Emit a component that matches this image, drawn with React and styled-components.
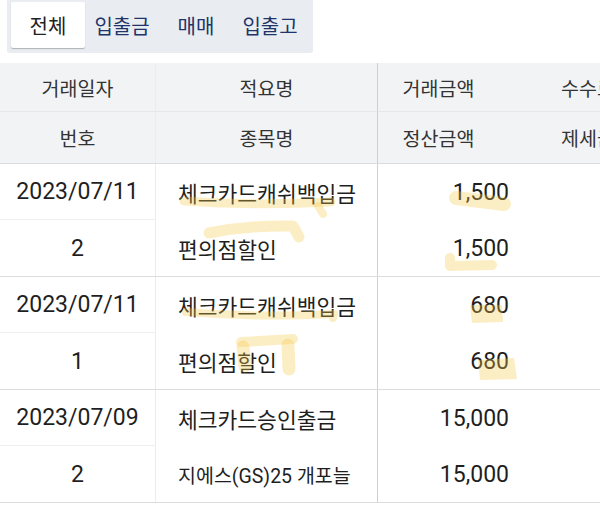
import styled, { createGlobalStyle } from 'styled-components';

const GlobalStyle = createGlobalStyle`
  html, body {
    margin: 0;
    padding: 0;
    background: #ffffff;
  }
  body {
    font-family: "Roboto", "Noto Sans CJK KR", sans-serif;
    color: #222222;
  }
`;

const Page = styled.div`
  position: relative;
  width: 600px;
  height: 514px;
  overflow: hidden;
  background: #ffffff;
`;

const TabBar = styled.div`
  display: inline-flex;
  margin-left: 7px;
  padding: 2px 6px 5px 4px;
  background: #e9edf1;
  border-radius: 0 0 3px 3px;
`;

const Tab = styled.button`
  width: 74px;
  height: 46px;
  border: none;
  border-radius: 2px;
  padding: 0;
  font-family: "Noto Sans CJK KR", sans-serif;
  font-size: 20px;
  cursor: pointer;
  background: ${(p) => (p.$active ? '#ffffff' : 'transparent')};
  color: ${(p) => (p.$active ? '#222222' : '#22336a')};
  box-shadow: ${(p) => (p.$active ? '0 1px 1px rgba(0, 0, 0, 0.25)' : 'none')};
`;

const Table = styled.div`
  margin-top: 10px;
  width: 760px;
`;

const Group = styled.div`
  display: grid;
  grid-template-columns: 156px 222px 143px 134px 105px;
  grid-template-rows: ${(p) => (p.$head ? '49px 51px' : '56px 56px')};
  background: ${(p) => (p.$head ? '#f2f3f5' : '#ffffff')};
  border-bottom: 1px solid #dcdcdc;
`;

const Cell = styled.div`
  box-sizing: border-box;
  display: flex;
  align-items: center;
  justify-content: ${(p) =>
    p.$align === 'right' ? 'flex-end' : p.$align === 'left' ? 'flex-start' : 'center'};
  padding: ${(p) => p.$pad || '0'};
  border-right: ${(p) =>
    p.$line === 'dark' ? '1px solid #cfcfcf' : p.$line === 'light' ? '1px solid #ececec' : 'none'};
  border-bottom: ${(p) => (p.$under ? `1px solid ${p.$under}` : 'none')};
  font-size: ${(p) => p.$size || '23px'};
  color: #1f1f1f;
  white-space: nowrap;
`;

const HeadText = styled.span`
  font-family: "Noto Sans CJK KR", sans-serif;
  font-size: 19.5px;
  color: #333333;
`;

const Highlights = styled.svg`
  position: absolute;
  top: 0;
  left: 0;
  pointer-events: none;
`;

const tabs = ['전체', '입출금', '매매', '입출고'];

const rows = [
  { date: '2023/07/11', no: '2', memo: '체크카드캐쉬백입금', item: '편의점할인', amount: '1,500', settle: '1,500' },
  { date: '2023/07/11', no: '1', memo: '체크카드캐쉬백입금', item: '편의점할인', amount: '680', settle: '680' },
  { date: '2023/07/09', no: '2', memo: '체크카드승인출금', item: '지에스(GS)25 개포늘', amount: '15,000', settle: '15,000', small: true },
];

function HeaderGroup() {
  const under = '#e6e7ea';
  return (
    <Group $head>
      <Cell $line="light" $under={under}><HeadText>거래일자</HeadText></Cell>
      <Cell $line="dark" $under={under}><HeadText>적요명</HeadText></Cell>
      <Cell $under={under} $pad="0 22px 0 0"><HeadText>거래금액</HeadText></Cell>
      <Cell $under={under}><HeadText>수수료</HeadText></Cell>
      <Cell $under={under} />
      <Cell $line="light"><HeadText>번호</HeadText></Cell>
      <Cell $line="dark"><HeadText>종목명</HeadText></Cell>
      <Cell $pad="0 22px 0 0"><HeadText>정산금액</HeadText></Cell>
      <Cell><HeadText>제세금</HeadText></Cell>
      <Cell />
    </Group>
  );
}

function RowGroup({ row }) {
  return (
    <Group>
      <Cell $line="light" $under="#efefef">{row.date}</Cell>
      <Cell $line="dark" $align="left" $pad="0 0 0 22px" $size="21.5px">{row.memo}</Cell>
      <Cell $align="right" $pad="0 12px 0 0">{row.amount}</Cell>
      <Cell />
      <Cell />
      <Cell $line="light">{row.no}</Cell>
      <Cell $line="dark" $align="left" $pad="0 0 0 22px" $size={row.small ? '19.5px' : '21.5px'}>
        {row.item}
      </Cell>
      <Cell $align="right" $pad="0 12px 0 0">{row.settle}</Cell>
      <Cell />
      <Cell />
    </Group>
  );
}

function Marker() {
  const ink = { stroke: '#f7c948', strokeOpacity: 0.32, fill: 'none', strokeLinecap: 'round', strokeLinejoin: 'round' };
  const blob = { fill: '#f7c948', fillOpacity: 0.32 };
  return (
    <Highlights width="600" height="514" viewBox="0 0 600 514">
      <path d="M184 201 Q 255 206 331 202" strokeWidth="9" {...ink} />
      <path d="M318 206 L 323 214" strokeWidth="8" {...ink} />
      <path d="M209 233 Q 250 225 293 226 L 299 237" strokeWidth="11" {...ink} />
      <path d="M456 198 L 504 204" strokeWidth="14" {...ink} />
      <path d="M450 258 L 450 266 L 492 265" strokeWidth="10" {...ink} />
      <path d="M186 312 Q 260 318 334 314 L 333 318" strokeWidth="8" {...ink} />
      <path d="M241 342 L 293 339" strokeWidth="10" {...ink} />
      <path d="M243 347 L 245 366 M 288 345 L 289 369" strokeWidth="13" {...ink} />
      <polygon points="470,305 502,305 503,322 472,323" {...blob} />
      <polygon points="478,360 514,358 517,379 480,380" {...blob} />
    </Highlights>
  );
}

export default function App() {
  return (
    <Page>
      <GlobalStyle />
      <TabBar>
        {tabs.map((t, i) => (
          <Tab key={t} $active={i === 0}>{t}</Tab>
        ))}
      </TabBar>
      <Table>
        <HeaderGroup />
        {rows.map((r, i) => (
          <RowGroup key={i} row={r} />
        ))}
      </Table>
      <Marker />
    </Page>
  );
}
